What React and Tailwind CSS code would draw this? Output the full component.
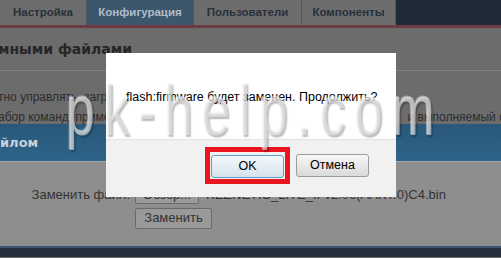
import React from "react";

const tabs = [
    { label: "Настройка", w: "w-[87px]", active: false },
    { label: "Конфигурация", w: "w-[107px]", active: true },
    { label: "Пользователи", w: "w-[108px]", active: false },
    { label: "Компоненты", w: "w-[94px]", active: false },
];

function DialogButton({ children, focused }) {
    return (
        <button
            type="button"
            className={`h-[23px] w-[73px] rounded-[3px] border text-[12.5px] text-black bg-gradient-to-b ${
                focused
                    ? "border-[#5e9ccf] from-[#f3f8fb] to-[#d6e3ec]"
                    : "border-[#9c9c9c] from-[#f7f7f7] to-[#dadada]"
            }`}
        >
            {children}
        </button>
    );
}

export default function App() {
    return (
        <div className="relative w-[501px] h-[258px] overflow-hidden bg-[#6c6c6c] font-['Liberation_Sans',Arial,sans-serif]">
            {/* Top tabs */}
            <div className="flex h-[25px] bg-[#1e2a36]">
                {tabs.map((tab) => (
                    <div
                        key={tab.label}
                        className={`${tab.w} flex items-center justify-center border-r border-[#585858] text-[11.5px] font-bold ${
                            tab.active
                                ? "bg-[#3c566c] text-[#b0bdc8]"
                                : "bg-[#6d6d6d] text-[#27313b]"
                        }`}
                    >
                        {tab.label}
                    </div>
                ))}
            </div>
            <div className="h-[3px] bg-[#6e3a43]" />

            {/* Section heading */}
            <div className="flex h-[42px] items-center whitespace-nowrap">
                <span className="-ml-[2px] font-['DejaVu_Sans',Verdana,sans-serif] text-[14px] font-bold text-[#262626]">
                    мными файлами
                </span>
            </div>
            <div className="h-px bg-[#838383]" />

            {/* Description rows */}
            <div className="flex h-[53px] flex-col gap-[6px] pt-[19px] text-[12px] leading-[14px] text-[#2c2c2c] whitespace-nowrap">
                <div className="-ml-[2px]">тно управлять, загружать и удалять файлы конфигурации</div>
                <div className="flex justify-between">
                    <span className="-ml-[2px]">абор команд, применяемых при старте</span>
                    <span className="-mr-[8px]">и выполняемый ф</span>
                </div>
            </div>

            {/* Blue section bar */}
            <div className="flex h-[37px] items-center bg-gradient-to-b from-[#29587a] to-[#2e6488]">
                <span className="font-['DejaVu_Sans',Verdana,sans-serif] text-[13px] font-bold text-[#c6d1d9]">
                    йлом
                </span>
            </div>
            <div className="h-px bg-[#a2a6a9]" />

            {/* File replace form */}
            <div className="flex h-[84px] flex-col gap-[3px] bg-[#8e8e8e] pt-[23px] text-[13px] text-[#333]">
                <div className="flex items-center whitespace-nowrap">
                    <span className="w-[131px] pr-px text-right">Заменить файл:</span>
                    <span className="ml-[4px] flex h-[19px] w-[64px] items-center justify-center rounded-[2px] border border-[#6a6a6a] bg-[#9a9a9a]">
                        Обзор...
                    </span>
                    <span className="ml-[7px]">KEENETIC_LITE_II-v2.06(AAKT.0)C4.bin</span>
                </div>
                <div className="flex">
                    <span className="ml-[135px] flex h-[21px] w-[77px] items-center justify-center rounded-[2px] border border-[#6a6a6a] bg-[#999999]">
                        Заменить
                    </span>
                </div>
            </div>

            {/* Bottom bar */}
            <div className="h-[2px] bg-[#3b5872]" />
            <div className="h-[9px] bg-[#25323e]" />

            {/* Confirm dialog */}
            <div className="absolute left-[106px] top-[53px] flex h-[144px] w-[290px] flex-col bg-white">
                <div className="h-[86px] pl-[20px] pt-[37px] text-[12.5px] leading-[15px] text-black whitespace-nowrap">
                    flash:firmware будет заменен. Продолжить?
                </div>
                <div className="flex flex-1 items-center justify-end gap-[6px] border-t border-[#e2e2e2] bg-[#f1f1f1] pb-[6px] pr-[27px]">
                    <div className="border-[5px] border-[#e8141e] p-px">
                        <DialogButton focused>OK</DialogButton>
                    </div>
                    <DialogButton>Отмена</DialogButton>
                </div>
            </div>

            {/* Watermark */}
            <div className="pointer-events-none absolute left-[66px] top-[74px] origin-left scale-x-[0.72] whitespace-nowrap text-[72px] leading-[72px] tracking-[12px] text-[#f0f0f0]/55 [text-shadow:2px_2px_2px_rgba(0,0,0,0.28),-1px_-1px_1px_rgba(255,255,255,0.4)]">
                pk-help.com
            </div>
        </div>
    );
}
